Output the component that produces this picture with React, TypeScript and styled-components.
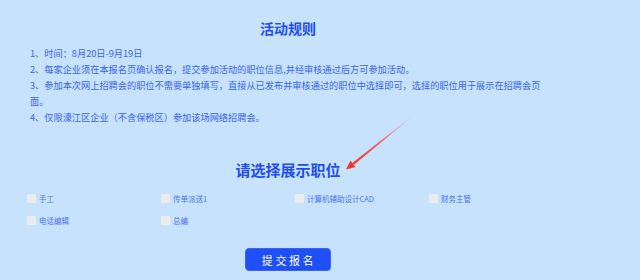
import styled, { createGlobalStyle } from "styled-components";

const rules = [
    "1、时间：8月20日-9月19日",
    "2、每家企业须在本报名页确认报名，提交参加活动的职位信息,并经审核通过后方可参加活动。",
    "3、参加本次网上招聘会的职位不需要单独填写，直接从已发布并审核通过的职位中选择即可，选择的职位用于展示在招聘会页面。",
    "4、仅限濠江区企业（不含保税区）参加该场网络招聘会。",
];

const positions = ["手工", "传单派送1", "计算机辅助设计CAD", "财务主管", "电话编辑", "总编"];

export default function App() {
    return (
        <>
            <GlobalStyle />
            <Page>
                <Title>活动规则</Title>
                <Rules>
                    {rules.map((r) => (
                        <p key={r}>{r}</p>
                    ))}
                </Rules>
                <SubTitle>请选择展示职位</SubTitle>
                <Grid>
                    {positions.map((p) => (
                        <Option key={p}>
                            <Box type="checkbox" />
                            <span>{p}</span>
                        </Option>
                    ))}
                </Grid>
                <Footer>
                    <Submit>提交报名</Submit>
                </Footer>
                <Arrow width="80" height="66" viewBox="0 0 80 66">
                    <defs>
                        <linearGradient id="arrowFade" x1="72" y1="7" x2="6" y2="60" gradientUnits="userSpaceOnUse">
                            <stop offset="0" stopColor="#ff6b6b" stopOpacity="0.05" />
                            <stop offset="0.45" stopColor="#f44848" stopOpacity="0.8" />
                            <stop offset="1" stopColor="#f03232" />
                        </linearGradient>
                    </defs>
                    <polygon points="71.9,6.9 71.5,6.5 12.2,52.9 13.8,54.9" fill="url(#arrowFade)" />
                    <polygon points="6,59.5 10.4,50.8 15.6,57" fill="#f03232" />
                </Arrow>
            </Page>
        </>
    );
}

const GlobalStyle = createGlobalStyle`
    html, body {
        margin: 0;
        padding: 0;
        background: #c6e2fc;
    }
    body {
        font-family: "Noto Sans CJK SC", "Noto Sans", sans-serif;
    }
`;

const Page = styled.div`
    position: relative;
    width: 640px;
    height: 280px;
    box-sizing: border-box;
    padding: 18px 0 0 27px;
    overflow: hidden;
`;

const Title = styled.h1`
    width: 522px;
    margin: 0;
    font-size: 14px;
    line-height: 20px;
    font-weight: 700;
    color: #1f4df2;
    text-align: center;
`;

const Rules = styled.div`
    width: 515px;
    margin-top: 7px;
    padding-left: 3px;
    font-size: 9.2px;
    line-height: 16px;
    color: #3d64ee;

    p {
        margin: 0;
    }
`;

const SubTitle = styled.h2`
    width: 522px;
    margin: 35px 0 0;
    font-size: 15px;
    line-height: 20px;
    font-weight: 700;
    color: #1f4df2;
    text-align: center;
`;

const Grid = styled.div`
    display: grid;
    grid-template-columns: repeat(4, 134px);
    row-gap: 8px;
    margin-top: 11px;
`;

const Option = styled.label`
    display: flex;
    align-items: center;
    gap: 3px;
    height: 14px;
    font-size: 7.5px;
    color: #4c72f0;
`;

const Box = styled.input`
    appearance: none;
    width: 9px;
    height: 9px;
    margin: 0;
    border-radius: 1px;
    background: #ececec;
`;

const Footer = styled.div`
    width: 522px;
    display: flex;
    justify-content: center;
    margin-top: 21px;
`;

const Submit = styled.button`
    width: 86px;
    height: 23px;
    padding: 0 0 0 2px;
    border: 1px solid #3a63f0;
    border-radius: 4px;
    background: #1f4ff7;
    color: #fff;
    font-family: "Noto Sans CJK SC", sans-serif;
    font-size: 11px;
    letter-spacing: 2.6px;
`;

const Arrow = styled.svg`
    position: absolute;
    left: 340px;
    top: 110px;
`;
